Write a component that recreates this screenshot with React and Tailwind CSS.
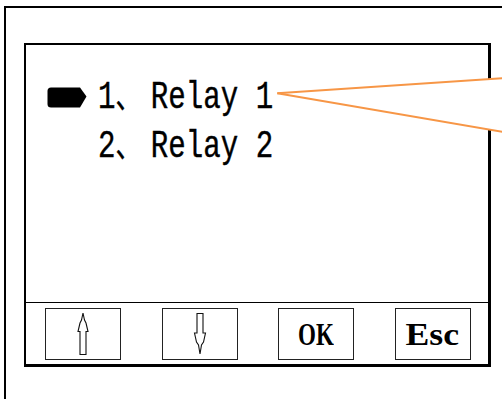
import React from "react";

function Bullet() {
  return (
    <svg width="40" height="21" viewBox="0 0 40 21" className="block shrink-0">
      <path d="M4 0.5 H33 L39.5 9.5 L33 20.5 H4 Q0.5 20.5 0.5 17 V4 Q0.5 0.5 4 0.5 Z" fill="#000" />
    </svg>
  );
}

function UpArrow() {
  return (
    <svg width="14" height="44" viewBox="0 0 14 44" className="block">
      <path
        d="M7 1 L8.5 8 L10 11 L12 19.5 L10 19.5 L10 42.5 L4 42.5 L4 19.5 L2 19.5 L4 11 L5.5 8 Z"
        fill="#fff"
        stroke="#111"
        strokeWidth="1.1"
        strokeLinejoin="miter"
      />
    </svg>
  );
}

function DownArrow() {
  return (
    <svg width="14" height="44" viewBox="0 0 14 44" className="block">
      <path
        d="M4 1.5 L10 1.5 L10 21 L12.5 21 L10.5 30 L8.5 33 L7 42 L5.5 33 L3.5 30 L1.5 21 L4 21 Z"
        fill="#fff"
        stroke="#111"
        strokeWidth="1.1"
      />
    </svg>
  );
}

function Row({ num, label, active }) {
  return (
    <div className="flex items-start h-[49.5px] leading-[49px]">
      <div className="w-[51px] shrink-0 pt-[14.5px]">
        {active ? <Bullet /> : null}
      </div>
      <div
        className="origin-left scale-x-[0.767] whitespace-nowrap text-[38px] font-normal text-black [-webkit-text-stroke:0.4px_#000]"
        style={{ fontFamily: '"Liberation Mono", monospace' }}
      >
        <span>{num}</span>
        <span
          className="inline-block w-[46px] text-[33px] leading-[40px]"
          style={{ fontFamily: '"Noto Sans CJK SC", sans-serif' }}
        >
          、
        </span>
        <span>{label}</span>
      </div>
    </div>
  );
}

function Btn({ children }) {
  return (
    <div className="w-[76px] h-[52px] border border-[#222] flex items-center justify-center bg-white">
      {children}
    </div>
  );
}

export default function App() {
  return (
    <div className="relative w-[502px] h-[399px] bg-white overflow-hidden">
      <div className="ml-[4px] mt-[6px] w-[600px] h-[500px] border-l-2 border-t-2 border-black pl-[18px] pt-[35px]">
        <div className="w-[467px] h-[324px] border-2 border-r-[3px] border-b-[3px] border-black flex flex-col">
          <div className="h-[257px] pt-[27.5px] pl-[21px]">
            <Row num="1" label="Relay 1" active />
            <Row num="2" label="Relay 2" />
          </div>
          <div className="h-px bg-black" />
          <div className="flex-1 flex items-start pt-[5px] pl-[19px] gap-[40.5px]">
            <Btn>
              <UpArrow />
            </Btn>
            <Btn>
              <DownArrow />
            </Btn>
            <Btn>
              <span
                className="inline-block scale-x-[0.72] font-bold text-[32px] leading-none text-black"
                style={{ fontFamily: '"Liberation Serif", serif' }}
              >
                OK
              </span>
            </Btn>
            <Btn>
              <span
                className="inline-block scale-x-[1.15] font-semibold text-[31px] leading-none text-black"
                style={{ fontFamily: '"Liberation Serif", serif' }}
              >
                Esc
              </span>
            </Btn>
          </div>
        </div>
      </div>
      <svg
        className="absolute left-0 top-0 pointer-events-none"
        width="502"
        height="399"
        viewBox="0 0 502 399"
      >
        <polygon points="277.3,93.3 510,77.8 510,133.1" fill="#fff" />
        <line x1="277.3" y1="93.3" x2="510" y2="77.8" stroke="#F79646" strokeWidth="2" />
        <line x1="277.3" y1="93.3" x2="510" y2="133.1" stroke="#F79646" strokeWidth="2" />
      </svg>
    </div>
  );
}
